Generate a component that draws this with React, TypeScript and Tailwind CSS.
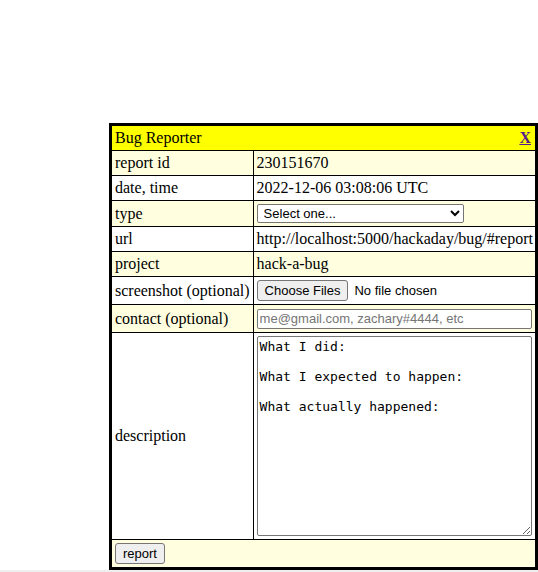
import { useState } from 'react'

const rows: { label: string; value: string; shade: boolean }[] = [
  { label: 'report id', value: '230151670', shade: true },
  { label: 'date, time', value: '2022-12-06 03:08:06 UTC', shade: false },
]

export default function App() {
  const [type, setType] = useState('')
  const [desc, setDesc] = useState('What I did:\n\nWhat I expected to happen:\n\nWhat actually happened:\n')

  const cell = 'border border-black px-[3px] py-[3px] leading-[18px] align-middle'
  const sans = { fontFamily: '"Liberation Sans", Arial, sans-serif' }

  return (
    <div className="h-[572px] w-[538px] flex flex-col bg-white" style={{ fontFamily: '"Liberation Serif", "Times New Roman", serif' }}>
      <div className="flex-1 flex items-end justify-end">
        <table className="border-collapse border-[3px] border-black text-[16px] text-black w-[429px]">
          <tbody>
            <tr className="bg-[#ffff00]">
              <td colSpan={2} className={cell}>
                <div className="flex justify-between">
                  <span>Bug Reporter</span>
                  <a href="#" className="font-bold underline text-[#551a8b] pr-[1px]">X</a>
                </div>
              </td>
            </tr>
            {rows.map((r) => (
              <tr key={r.label} className={r.shade ? 'bg-[#ffffe0]' : 'bg-white'}>
                <td className={`${cell} w-[141px] whitespace-nowrap`}>{r.label}</td>
                <td className={cell}>{r.value}</td>
              </tr>
            ))}
            <tr className="bg-[#ffffe0]">
              <td className={cell}>type</td>
              <td className={cell}>
                <select
                  value={type}
                  onChange={(e) => setType(e.target.value)}
                  className="block w-[207px] h-[19px] text-[13px] bg-white border border-[#767676] rounded-[2px] px-[2px] appearance-auto"
                  style={sans}
                >
                  <option value="">Select one...</option>
                  <option value="bug">bug</option>
                  <option value="feature">feature</option>
                </select>
              </td>
            </tr>
            <tr className="bg-white">
              <td className={cell}>url</td>
              <td className={`${cell} whitespace-nowrap pr-[2px]`}>http://localhost:5000/hackaday/bug/#report</td>
            </tr>
            <tr className="bg-[#ffffe0]">
              <td className={cell}>project</td>
              <td className={cell}>hack-a-bug</td>
            </tr>
            <tr className="bg-white">
              <td className={`${cell} whitespace-nowrap py-[4px] leading-[19px]`}>screenshot (optional)</td>
              <td className={cell}>
                <div className="flex items-center text-[13px]" style={sans}>
                  <span className="h-[21px] px-[7px] flex items-center bg-[#efefef] border border-[#767676] rounded-[3px]">Choose Files</span>
                  <span className="ml-[6px]">No file chosen</span>
                </div>
              </td>
            </tr>
            <tr className="bg-[#ffffe0]">
              <td className={`${cell} py-[4px] leading-[19px]`}>contact (optional)</td>
              <td className={cell}>
                <input
                  placeholder="me@gmail.com, zachary#4444, etc"
                  className="block w-full h-[20px] text-[13px] bg-white border border-[#767676] rounded-[2px] px-[2px] placeholder:text-[#757575]"
                  style={sans}
                />
              </td>
            </tr>
            <tr className="bg-white">
              <td className={cell}>description</td>
              <td className={cell}>
                <textarea
                  value={desc}
                  onChange={(e) => setDesc(e.target.value)}
                  className="block w-full h-[200px] text-[13px] leading-[15px] bg-white border border-[#767676] rounded-[2px] px-[2px] py-[2px] resize-y"
                  style={{ fontFamily: '"DejaVu Sans Mono", monospace' }}
                />
              </td>
            </tr>
            <tr className="bg-[#ffffe0]">
              <td colSpan={2} className={cell}>
                <button
                  className="h-[21px] px-[7px] text-[13px] bg-[#efefef] border border-[#767676] rounded-[3px]"
                  style={sans}
                >
                  report
                </button>
              </td>
            </tr>
          </tbody>
        </table>
      </div>
      <div className="h-[2px] bg-[#eeeeee]" />
    </div>
  )
}
